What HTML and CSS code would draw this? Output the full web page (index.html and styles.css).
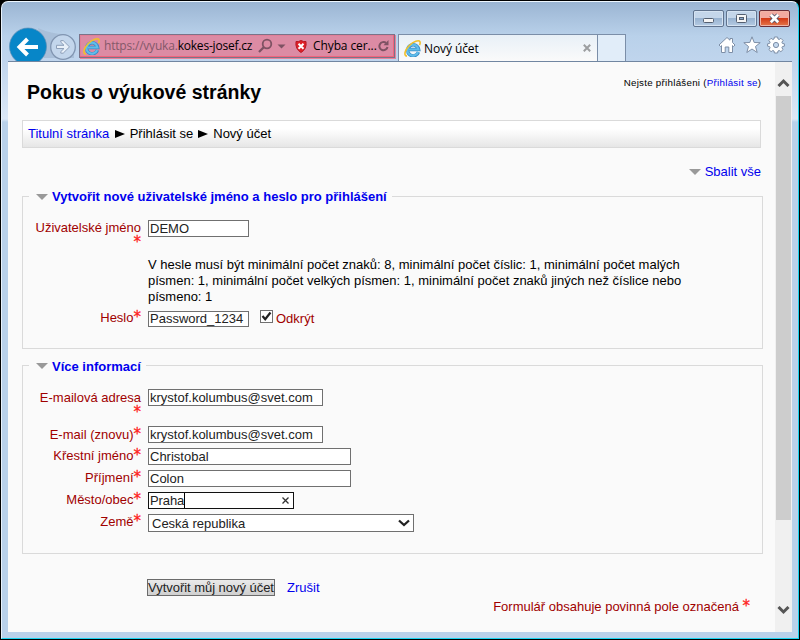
FILE: index.html
```html
<!DOCTYPE html>
<html lang="cs">
<head>
<meta charset="utf-8">
<title>Nový účet</title>
<link rel="stylesheet" href="styles.css">
</head>
<body>
<svg width="0" height="0" class="defs" aria-hidden="true">
  <defs>
    <symbol id="ie" viewBox="0 0 16 16">
      <path d="M13.600 11.400A5.200 5.200 0 1 1 13.800 8.900H4.500" fill="none" stroke="#3b8cc6" stroke-width="3.200"/>
      <path d="M13.300 11.400A5.200 5.200 0 1 1 13.600 8.900H4.500" fill="none" stroke="#5fbdea" stroke-width="2"/>
      <path d="M2.800 15.200C-.8 14.800 1 9.200 5 5.200C9 1.200 14 -.2 15 1.600C15.400 2.500 15.200 3.600 14.600 4.800" fill="none" stroke="#efc02d" stroke-width="1.500"/>
    </symbol>
  </defs>
</svg>
<div class="window">
  <header class="chrome">
    <div class="titlebar">
      <span class="winbtn"><svg width="29" height="15"><rect x="9.500" y="7.500" width="10" height="4" rx="1" fill="#f5f5f5" stroke="#545f70"/></svg></span>
      <span class="winbtn"><svg width="29" height="15"><rect x="9.500" y="3.500" width="10" height="8" rx="1" fill="#f5f5f5" stroke="#545f70"/><rect x="12.500" y="6.500" width="4" height="2" fill="#8aa8ca" stroke="#545f70"/></svg></span>
      <span class="winbtn close"><svg width="29" height="15"><path d="M11 4L18 11M18 4L11 11" stroke="#545468" stroke-width="4.500"/><path d="M10.800 3.800L18.200 11.200M18.200 3.800L10.800 11.200" stroke="#fff" stroke-width="2.700"/></svg></span>
    </div>
    <div class="toolbar">
      <svg class="navbuttons" width="70" height="34" viewBox="0 0 70 34">
        <path d="M30 1Q43 7 57 7L66 14V31H36Z" fill="#a9bfd9"/>
        <circle cx="55" cy="20" r="12.300" fill="#c3d6ec" stroke="#8195b1" stroke-width="1.300"/>
        <path d="M48.500 18.300H56L52.800 15.200V13.600H55.200L61.500 19.900L55.200 26.200H52.800V24.600L56 21.500H48.500Z" fill="#e8f0f9" stroke="#8d9fb9"/>
        <circle cx="20" cy="19.500" r="18.500" fill="#0786c8" stroke="#5d8eb5" stroke-width=".7"/>
        <path d="M30 20H12M19.500 12L11.500 20L19.500 28" fill="none" stroke="#fff" stroke-width="4"/>
      </svg>
      <div class="address">
        <svg class="ie" width="17" height="17"><use href="#ie"/></svg>
        <span class="url"><i>https://vyuka.</i>kokes-josef.cz</span>
        <svg class="search" width="30" height="16" viewBox="0 0 30 16"><circle cx="9" cy="6" r="4.300" fill="none" stroke="#7e5263" stroke-width="1.800"/><path d="M6 9L1 14" stroke="#7e5263" stroke-width="2.300"/><path d="M19.500 6.500H27.500L23.500 10.500Z" fill="#7e5263"/></svg>
        <svg class="shield" width="12" height="13" viewBox="0 0 12 13"><path d="M1 1.500Q3.500 2 6 .5Q8.500 2 11 1.500Q12 9 6 12.500Q0 9 1 1.500Z" fill="#df2028" stroke="#b61924"/><path d="M3.500 3.700L8.500 8.700M8.500 3.700L3.500 8.700" stroke="#fff" stroke-width="2"/></svg>
        <span class="cert">Chyba cer...</span>
        <svg class="reload" width="12" height="14" viewBox="0 0 12 14"><path d="M8 3.900A4.100 4.100 0 1 0 9.500 8" fill="none" stroke="#7e5263" stroke-width="2"/><path d="M10.500 1V6.200H5.500Z" fill="#7e5263"/></svg>
      </div>
      <div class="tab">
        <svg width="17" height="17"><use href="#ie"/></svg>
        <span>Nový účet</span>
        <svg class="tabx" width="8" height="8"><path d="M.8.8L7.200 7.200M7.200.8L.8 7.200" stroke="#9c9ea0" stroke-width="2"/></svg>
      </div>
      <div class="newtab"></div>
      <div class="tools">
        <svg width="18" height="18" viewBox="0 0 18 18"><path d="M1 9L9 1.500L12 4.200V2.500H14.500V6.500L17 9L15.500 10.500L14.500 9.600V16.500H10.800V11H7.200V16.500H3.500V9.600L2.500 10.500Z" fill="#fff" stroke="#7d8ea6"/></svg>
        <svg width="18" height="18" viewBox="0 0 18 18"><path d="M9 .8L11.200 6.500L17.200 6.700L12.500 10.500L14.200 16.500L9 13L3.800 16.500L5.500 10.500L.8 6.700L6.800 6.500Z" fill="#fff" stroke="#7d8ea6"/></svg>
        <svg width="18" height="18" viewBox="0 0 18 18"><path d="M7.400 1h3.200l.4 2 1.200.5 1.700-1.200 2.200 2.200-1.200 1.700.5 1.200 2 .4v2.400l-2 .4-.5 1.200 1.200 1.700-2.200 2.200-1.700-1.200-1.200.5-.4 2H7.400l-.4-2-1.200-.5-1.700 1.200-2.200-2.200 1.200-1.700-.5-1.200-2-.4V7.800l2-.4.5-1.200L1.900 4.500l2.200-2.200 1.700 1.200L7 3Z" fill="#fff" stroke="#7d8ea6"/><circle cx="9" cy="9" r="2.600" fill="#c5d9ef" stroke="#7d8ea6"/></svg>
      </div>
    </div>
  </header>
  <div class="viewport">
    <main>
      <div class="pagehead">
        <h1>Pokus o výukové stránky</h1>
        <p class="login">Nejste přihlášeni (<a>Přihlásit se</a>)</p>
      </div>
      <nav class="crumbs"><a>Titulní stránka</a><b class="sep"></b><span>Přihlásit se</span><b class="sep"></b><span>Nový účet</span></nav>
      <div class="collapse"><b class="tri"></b><a>Sbalit vše</a></div>
      <section class="group first">
        <h2><b class="tri"></b><span>Vytvořit nové uživatelské jméno a heslo pro přihlášení</span></h2>
        <div class="row r1"><label>Uživatelské jméno<em class="below">*</em></label><span class="input w101">DEMO</span></div>
        <p class="hint">V hesle musí být minimální počet znaků: 8, minimální počet číslic: 1, minimální počet malých<br>písmen: 1, minimální počet velkých písmen: 1, minimální počet znaků jiných než číslice nebo<br>písmeno: 1</p>
        <div class="row r2"><label>Heslo<em>*</em></label><span class="input w101 short">Password_1234</span><span class="check"><svg width="11" height="11"><path d="M1.500 5L4.200 8.200L9.500 1.500" fill="none" stroke="#222" stroke-width="2.200"/></svg></span><span class="reveal">Odkrýt</span></div>
      </section>
      <section class="group second">
        <h2><b class="tri"></b><span>Více informací</span></h2>
        <div class="row r3"><label>E-mailová adresa<em class="below">*</em></label><span class="input w175">krystof.kolumbus@svet.com</span></div>
        <div class="row r4"><label>E-mail (znovu)<em>*</em></label><span class="input w175">krystof.kolumbus@svet.com</span></div>
        <div class="row"><label>Křestní jméno<em>*</em></label><span class="input w203">Christobal</span></div>
        <div class="row"><label>Příjmení<em>*</em></label><span class="input w203">Colon</span></div>
        <div class="row"><label>Město/obec<em>*</em></label><span class="input w146 focus"><span class="caret">Praha</span><svg width="7" height="7"><path d="M.5.5L6.500 6.500M6.500.5L.5 6.500" stroke="#333" stroke-width="1.300"/></svg></span></div>
        <div class="row"><label>Země<em>*</em></label><span class="input select">Ceská republika<svg width="12" height="8"><path d="M1 1.500L6 6L11 1.500" fill="none" stroke="#222" stroke-width="2.300"/></svg></span></div>
      </section>
      <div class="actions"><button>Vytvořit můj nový účet</button><a>Zrušit</a></div>
      <p class="required">Formulář obsahuje povinná pole označená <em>*</em></p>
    </main>
    <div class="scrollbar">
      <svg width="13" height="9"><path d="M1.500 8L6.500 3L11.500 8" fill="none" stroke="#555" stroke-width="3"/></svg>
      <div class="thumb"></div>
      <svg class="down" width="13" height="9"><path d="M1.500 1L6.500 6L11.500 1" fill="none" stroke="#555" stroke-width="3"/></svg>
    </div>
  </div>
</div>
</body>
</html>
```

FILE: styles.css
```css
* { box-sizing: border-box; }
body { margin: 0; width: 800px; height: 640px; overflow: hidden; background: #000; font: 13px/16px "Liberation Sans", Arial, sans-serif; color: #000; }
.defs { position: absolute; }
svg { flex: none; display: block; }
h1, h2, p { margin: 0; }
a { color: #0000ee; }
.window { width: 798px; height: 638px; margin: 1px; padding: 0 6px 6px; border: 1px solid #19d3f0; border-top-color: #eef7ff; border-left-color: #e8f2fc; border-radius: 7px 7px 0 0; background: linear-gradient(#9bb5d3, #b9d1ea 34px, #c0d5ed 60px, #dce8f6 117px, #b9d1ea 120px); }
.chrome { height: 60px; border-bottom: 1px solid #7186a1; display: flex; flex-direction: column; }
.titlebar { display: flex; justify-content: flex-end; gap: 2px; padding: 8px 2px 0 0; height: 24px; }
.winbtn { width: 31px; height: 17px; border: 1px solid #60738e; border-radius: 2px; box-shadow: inset 0 0 0 1px #d5e3f2; background: linear-gradient(#c4d6ea 45%, #98b3d1 50%, #b5cbe3); }
.winbtn.close { border-color: #6b2c35; box-shadow: inset 0 0 0 1px #efb3a6; background: linear-gradient(#f2aaa0 45%, #d43a17 50%, #e4774a); }
.toolbar { display: flex; height: 35px; align-items: flex-start; }
.navbuttons { margin-top: 1px; }
.address { width: 316px; height: 24px; margin: 8px 3px 0 1px; border: 1px solid #7b7389; background: #dc8ba4; box-shadow: inset -1px -1px 0 #f0647c, inset 1px 1px 0 #e17f98, 1px 1px 0 #e5839b; display: flex; align-items: center; padding: 0 4px 0 3px; font: 12px/20px "Open Sans", "Noto Sans", sans-serif; white-space: nowrap; }
.url { margin-left: 4px; width: 150px; letter-spacing: -.2px; }
.url i { font-style: normal; color: #84596a; }
.search { margin-left: 4px; }
.shield { margin-left: 7px; }
.cert { margin-left: 6px; width: 63px; letter-spacing: -.1px; }
.reload { margin-left: 2px; }
.tab { width: 200px; height: 27px; margin-top: 8px; border: 1px solid #7b8ea8; border-bottom: 0; background: linear-gradient(#e8f0f7, #fafafa); display: flex; align-items: center; padding: 0 6px 0 5px; gap: 3px; font: 12px/18px "Open Sans", "Noto Sans", sans-serif; letter-spacing: -.1px; }
.tab span { padding-top: 1px; }
.tabx { margin-left: auto; }
.newtab { width: 29px; height: 27px; margin: 8px 0 0 -1px; border: 1px solid #7b8ea8; border-bottom: 0; background: #e1edf9; }
.tools { margin: 10px 0 0 92px; display: flex; gap: 6.5px; }
.viewport { display: flex; height: 570px; background: #fafafa; }
main { width: 767px; padding: 0 12px 0 14px; }
.pagehead { height: 58px; padding: 13px 2px 0 5px; display: flex; justify-content: space-between; }
h1 { font-size: 19.5px; line-height: 34px; }
.login { font-size: 9.75px; line-height: 16px; letter-spacing: .27px; margin-right: -.27px; white-space: nowrap; }
.crumbs { width: 739px; height: 28px; border: 1px solid #dadada; background: linear-gradient(#fff 30%, #e6e6e6); display: flex; align-items: center; padding: 0 5px; }
.sep { border-left: 10px solid #000; border-top: 4px solid transparent; border-bottom: 4px solid transparent; margin: 0 5px 0 5.5px; }
.sep + span + .sep { margin-left: 5px; }
.collapse { height: 48px; padding: 16px 2px 0 0; display: flex; justify-content: flex-end; gap: 4px; }
.tri { flex: none; width: 12px; height: 6px; margin-top: 5px; border: 6px solid transparent; border-top-color: #999; border-bottom: 0; }
.group { width: 741px; border: 1px solid #dadada; }
.group.first { height: 153px; }
.group.second { height: 189px; margin-top: 16px; }
h2 { display: flex; gap: 4px; width: max-content; height: 16px; margin: -8px 0 0 6px; padding: 0 5px 0 7px; background: #fafafa; font-size: 13px; line-height: 16px; color: #0000ee; white-space: nowrap; }
.second h2 { line-height: 18px; }
.row { height: 22px; display: flex; color: #a00000; white-space: nowrap; }
.row label { width: 118px; margin-right: 7px; text-align: right; line-height: 16px; }
em { font-family: "DejaVu Sans", sans-serif; font-style: normal; color: #f22; font-size: 15px; line-height: 10px; vertical-align: 0; -webkit-text-stroke: .3px #f22; }
em.below { display: block; margin-top: -1px; line-height: 14px; }
.r1 { height: 44px; margin-top: 15px; }
.r2 { margin-top: 6px; }
.r2 label { margin-top: -1px; }
.r3 { height: 37px; margin-top: 15px; }
.r3 label, .r4 label { line-height: 17px; }
.input { height: 17px; border: 1px solid #707070; background: #fff; color: #222; padding-left: 1px; line-height: 15px; display: flex; align-items: center; }
.short { height: 16px; line-height: 14px; }
.w101 { width: 101px; } .w175 { width: 175px; } .w203 { width: 203px; } .w146 { width: 146px; }
.focus { border-color: #111; justify-content: space-between; padding-right: 4px; }
.caret { border-right: 1px solid #000; margin-right: -1px; letter-spacing: -.1px; }
.select { width: 266px; height: 18px; padding: 0 3px; justify-content: space-between; }
.hint { padding-left: 125px; margin-top: -7px; white-space: nowrap; }
.check { width: 13px; height: 13px; margin: -1px 3px 0 11px; border: 1px solid #707070; background: #fff; }
.actions { display: flex; padding: 25px 0 0 125px; gap: 12px; height: 44px; line-height: 17px; }
button { width: 128px; height: 17px; padding: 0; border: 1px solid #6b6b6b; background: linear-gradient(#eaeaea, #cfcfcf); font: inherit; line-height: 15px; color: #222; white-space: nowrap; letter-spacing: -.04px; }
.required { color: #a00000; text-align: right; padding-right: 13px; line-height: 17px; }
.scrollbar { width: 17px; background: #f0f0f0; display: flex; flex-direction: column; align-items: center; padding-top: 16px; }
.thumb { width: 15px; height: 424px; margin-top: 9px; background: #cdcdcd; }
.down { margin-top: 86px; }
```
